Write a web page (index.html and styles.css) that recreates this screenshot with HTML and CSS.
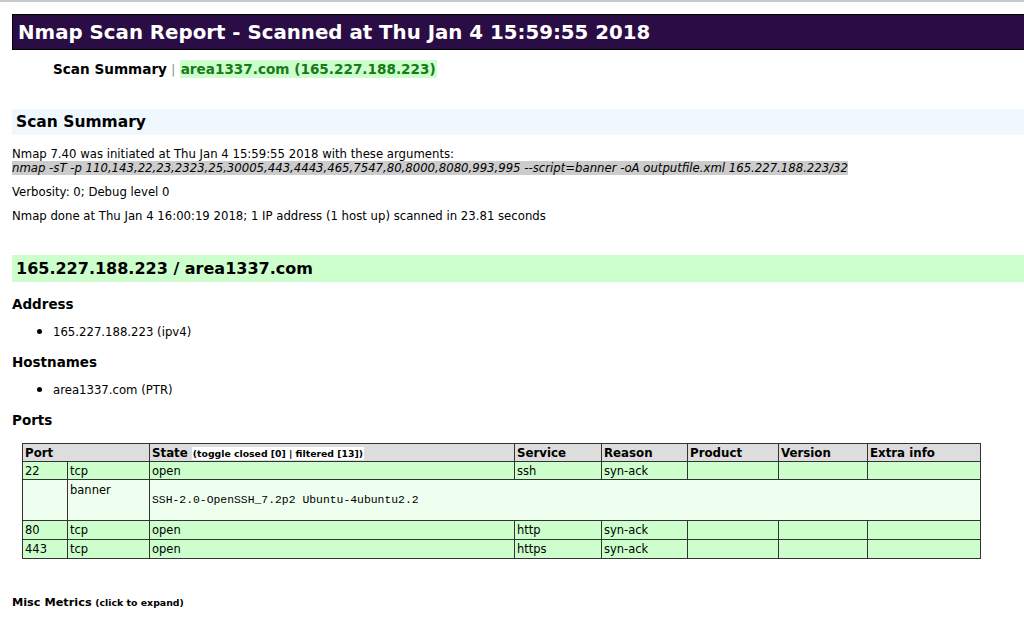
FILE: index.html
```html
<!DOCTYPE html>
<html>
<head>
<meta charset="utf-8">
<title>Nmap Scan Report</title>
<link rel="stylesheet" href="styles.css">
</head>
<body>
<div class="chrome"></div>
<div class="page">
  <h1 class="title">Nmap Scan Report - Scanned at Thu Jan 4 15:59:55 2018</h1>
  <div class="nav"><b>Scan Summary</b> <span class="sep">|</span> <span class="navlink">area1337.com (165.227.188.223)</span></div>

  <h2 class="sec sec-summary">Scan Summary</h2>
  <p class="args">Nmap 7.40 was initiated at Thu Jan 4 15:59:55 2018 with these arguments:<br><i class="cmd">nmap -sT -p 110,143,22,23,2323,25,30005,443,4443,465,7547,80,8000,8080,993,995 --script=banner -oA outputfile.xml 165.227.188.223/32</i></p>
  <p class="line">Verbosity: 0; Debug level 0</p>
  <p class="line">Nmap done at Thu Jan 4 16:00:19 2018; 1 IP address (1 host up) scanned in 23.81 seconds</p>

  <h2 class="sec sec-host">165.227.188.223 / area1337.com</h2>
  <h3 class="sub">Address</h3>
  <ul class="list"><li>165.227.188.223 (ipv4)</li></ul>
  <h3 class="sub">Hostnames</h3>
  <ul class="list"><li>area1337.com (PTR)</li></ul>
  <h3 class="sub">Ports</h3>

  <table class="ports">
    <colgroup>
      <col class="c-port"><col class="c-proto"><col class="c-state"><col class="c-service"><col class="c-reason"><col class="c-product"><col class="c-version"><col class="c-extra">
    </colgroup>
    <tr class="head">
      <th colspan="2">Port</th>
      <th>State <span class="toggle">(toggle closed [0] | filtered [13])</span></th>
      <th>Service</th>
      <th>Reason</th>
      <th>Product</th>
      <th>Version</th>
      <th>Extra info</th>
    </tr>
    <tr class="open">
      <td>22</td><td>tcp</td><td>open</td><td>ssh</td><td>syn-ack</td><td></td><td></td><td></td>
    </tr>
    <tr class="script">
      <td></td><td class="sname">banner</td><td colspan="6"><pre class="out">SSH-2.0-OpenSSH_7.2p2 Ubuntu-4ubuntu2.2</pre></td>
    </tr>
    <tr class="open tall">
      <td>80</td><td>tcp</td><td>open</td><td>http</td><td>syn-ack</td><td></td><td></td><td></td>
    </tr>
    <tr class="open tall">
      <td>443</td><td>tcp</td><td>open</td><td>https</td><td>syn-ack</td><td></td><td></td><td></td>
    </tr>
  </table>

  <div class="misc"><b>Misc Metrics</b> <span class="small">(click to expand)</span></div>
</div>
</body>
</html>
```

FILE: styles.css
```css
html, body {
  margin: 0;
  padding: 0;
  background: #ffffff;
}
body {
  font-family: "DejaVu Sans", Verdana, sans-serif;
  font-size: 11.7px;
  color: #000;
}
.chrome {
  height: 2px;
  background: #c9c9c9;
}
.page {
  padding: 12px 0 0 12px;
}
.title {
  margin: 0;
  height: 34px;
  line-height: 35px;
  background: #2a0d45;
  border: 1px solid #000;
  border-right: none;
  color: #fff;
  font-size: 19.8px;
  font-weight: bold;
  padding-left: 5px;
}
.nav {
  margin: 10px 0 0 41px;
  height: 18px;
  line-height: 19px;
  font-size: 13.6px;
}
.nav b { font-weight: bold; }
.sep { color: #888; font-size: 12px; }
.navlink {
  color: #197a19;
  background: #ccffcc;
  font-weight: bold;
  padding: 1px 1px;
}
.sec {
  margin: 0;
  font-weight: bold;
  padding-left: 4px;
}
.sec-summary {
  margin-top: 31px;
  height: 26px;
  line-height: 27px;
  font-size: 15.5px;
  background: #f0f8ff;
}
.args {
  margin: 12px 0 0 0;
  line-height: 14px;
}
.cmd {
  background: #cccccc;
}
.line {
  margin: 10px 0 0 0;
  line-height: 14px;
}
.sec-host {
  margin-top: 32px;
  height: 27px;
  line-height: 27px;
  font-size: 16px;
  background: #ccffcc;
}
.sub {
  margin: 13px 0 0 0;
  font-size: 13.5px;
  font-weight: bold;
  line-height: 18px;
}
.list {
  margin: 12px 0 0 0;
  padding-left: 41px;
  line-height: 15px;
  list-style: none;
}
.list li::before {
  content: "";
  display: inline-block;
  width: 5px;
  height: 5px;
  border-radius: 50%;
  background: #000;
  margin: 0 11px 0 -16px;
  vertical-align: 2px;
}
.ports {
  margin: 14px 0 0 10px;
  border-collapse: collapse;
  table-layout: fixed;
  width: 958px;
  border: 1px solid #222;
}
.c-port { width: 45px; }
.c-proto { width: 82px; }
.c-state { width: 365px; }
.c-service { width: 87px; }
.c-reason { width: 86px; }
.c-product { width: 91px; }
.c-version { width: 89px; }
.c-extra { width: 113px; }
.ports th, .ports td {
  border: 1px solid #333;
  padding: 0 2px;
  text-align: left;
  vertical-align: middle;
  font-size: 11.5px;
}
.ports th {
  height: 17px;
  background: #dddddd;
  font-weight: bold;
  font-size: 11.8px;
}
.toggle {
  font-size: 9.3px;
  background: #fff;
  padding: 1px 1px;
}
.open td {
  height: 17px;
  background: #ccffcc;
}
.open.tall td {
  height: 18px;
}
.script td {
  height: 36px;
  background: #efffef;
  vertical-align: top;
  padding-top: 4px;
  line-height: 13px;
}
.out {
  margin: 10px 0 0 0;
  font-family: "Liberation Mono", "Courier New", monospace;
  font-size: 11.4px;
  line-height: 13px;
}
.misc {
  margin-top: 36px;
  font-size: 11.3px;
  line-height: 16px;
}
.small {
  font-size: 9.4px;
  font-weight: bold;
}
```
